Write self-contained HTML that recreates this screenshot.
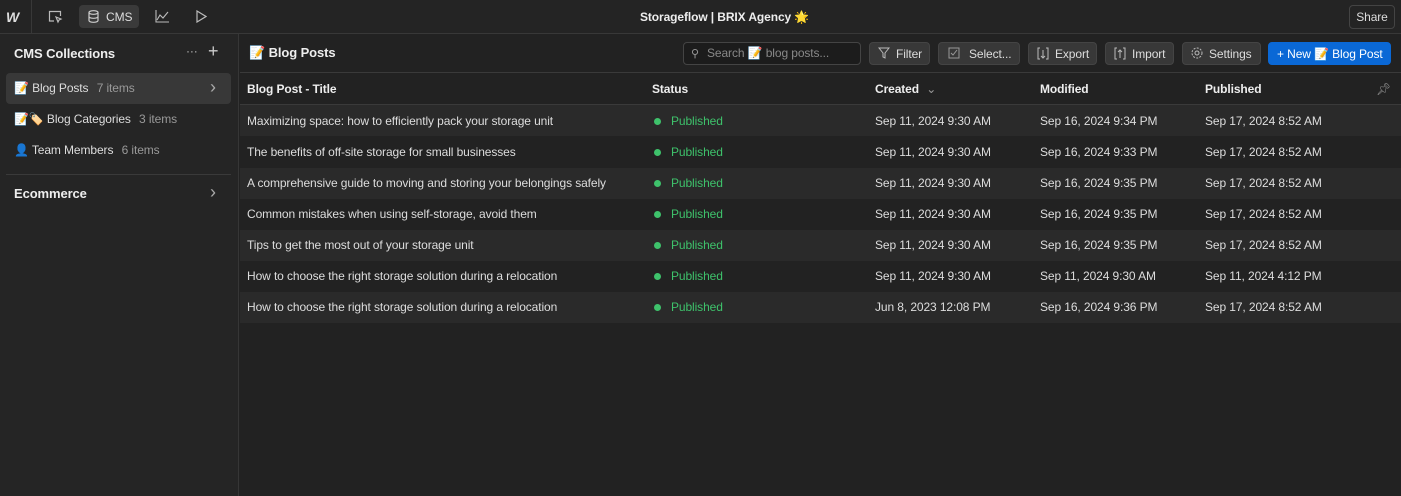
<!DOCTYPE html><html><head><meta charset="utf-8"><style>
*{box-sizing:border-box;margin:0;padding:0}
body{width:1401px;height:496px;background:#222;font-family:"Liberation Sans","Noto Sans CJK JP",sans-serif;color:#e6e6e6;font-size:12px;position:relative;overflow:hidden;letter-spacing:-0.1px}
.top{position:absolute;left:0;top:0;width:1401px;height:34px;background:#242424;border-bottom:1px solid #383838}
.side{position:absolute;left:0;top:34px;width:239px;height:462px;background:#252525;border-right:1px solid #363636}
.main{position:absolute;left:240px;top:34px;width:1161px;height:462px;background:#222}
.abs{position:absolute;white-space:nowrap}
.btn{position:absolute;top:8px;height:23px;background:#383838;border-radius:4px;color:#ddd;font-size:12px;line-height:23px;padding-left:26px;border:1px solid #444}
.row{position:absolute;left:0;width:1161px;height:31px;line-height:31px;font-size:12px;color:#ddd}
.row span{position:absolute}
.dot{display:inline-block;width:7px;height:7px;border-radius:50%;background:#3ec26b;margin-right:10px;vertical-align:0}
.pub{color:#3ec26b}
.h span{font-weight:bold;color:#eee}
.chev{font-size:18px;font-weight:300;color:#aaa}
</style></head><body>
<div class="top">
 <div class="abs" style="left:6px;top:9px;font-weight:bold;font-style:italic;font-size:14px;color:#ddd;letter-spacing:-2px">W</div>
 <div class="abs" style="left:31px;top:0;width:1px;height:34px;background:#383838"></div>
 <svg class="abs" style="left:48px;top:10px" width="15" height="14" viewBox="0 0 15 14" fill="none" stroke="#bbb" stroke-width="1.2"><path d="M6 11H1.5V1.5h11V6"/><path d="M8 7l5 2-2 1-1 2z"/></svg>
 <div class="abs" style="left:79px;top:5px;width:60px;height:23px;background:#3a3a3a;border-radius:4px"></div>
 <svg class="abs" style="left:88px;top:10px" width="11" height="13" viewBox="0 0 11 13" fill="none" stroke="#ccc" stroke-width="1.2"><ellipse cx="5.5" cy="2.5" rx="4.5" ry="1.8"/><path d="M1 2.5v8c0 1 2 1.8 4.5 1.8S10 11.5 10 10.5v-8M1 6.5c0 1 2 1.8 4.5 1.8S10 7.5 10 6.5"/></svg>
 <div class="abs" style="left:106px;top:10px;color:#ddd">CMS</div>
 <svg class="abs" style="left:155px;top:10px" width="14" height="13" viewBox="0 0 14 13" fill="none" stroke="#bbb" stroke-width="1.1"><path d="M1 0v12h13"/><path d="M2 10l3-5 3 3 5-6"/></svg>
 <svg class="abs" style="left:195px;top:10px" width="12" height="13" viewBox="0 0 12 13" fill="none" stroke="#bbb" stroke-width="1.2"><path d="M2 1l9 5.5L2 12z"/></svg>
 <div class="abs" style="left:640px;top:10px;font-size:12px;color:#eee;font-weight:bold">Storageflow | BRIX Agency 🌟</div>
 <div class="abs" style="left:1349px;top:5px;width:46px;height:24px;border:1px solid #444;border-radius:4px;text-align:center;line-height:22px;color:#ddd">Share</div>
</div>
<div class="side">
 <div class="abs" style="left:14px;top:12px;font-size:13px;font-weight:bold;color:#eee">CMS Collections</div>
 <div class="abs" style="left:186px;top:10px;color:#bbb;font-size:12px">···</div>
 <div class="abs" style="left:208px;top:7px;color:#ccc;font-size:18px;font-weight:300">+</div>
 <div class="abs" style="left:6px;top:39px;width:225px;height:31px;background:#383838;border-radius:4px"></div>
 <div class="abs" style="left:14px;top:47px;color:#ddd">📝 Blog Posts <span style="color:#999;margin-left:5px">7 items</span></div>
 <div class="abs chev" style="left:210px;top:43px">›</div>
 <div class="abs" style="left:14px;top:78px;color:#ddd">📝🏷️ Blog Categories <span style="color:#999;margin-left:5px">3 items</span></div>
 <div class="abs" style="left:14px;top:109px;color:#ddd">👤 Team Members <span style="color:#999;margin-left:5px">6 items</span></div>
 <div class="abs" style="left:6px;top:140px;width:225px;height:1px;background:#3a3a3a"></div>
 <div class="abs" style="left:14px;top:152px;font-size:13px;font-weight:bold;color:#eee">Ecommerce</div>
 <div class="abs chev" style="left:210px;top:148px">›</div>
</div>
<div class="main">
 <div class="abs" style="left:9px;top:11px;font-size:13px;font-weight:bold;color:#eee">📝 Blog Posts</div>
 <div class="abs" style="left:443px;top:8px;width:178px;height:23px;border:1px solid #444;border-radius:4px;background:#1c1c1c;color:#888;line-height:21px;padding-left:23px">Search 📝 blog posts...</div>
 <div class="abs" style="left:451px;top:13px;color:#999;font-size:11px">⚲</div>
 <div class="btn" style="left:629px;width:61px">Filter</div>
 <div class="btn" style="left:698px;width:82px;padding-left:30px">Select...</div>
 <div class="btn" style="left:788px;width:69px">Export</div>
 <div class="btn" style="left:865px;width:69px">Import</div>
 <div class="btn" style="left:942px;width:79px">Settings</div>
 <div class="btn" style="left:1028px;width:123px;background:#0a68d6;border-color:#0a68d6;color:#fff;padding-left:8px">+ New 📝 Blog Post</div>
 <svg class="abs" style="left:638px;top:13px" width="12" height="12" viewBox="0 0 12 12" fill="none" stroke="#bbb"><path d="M1 1h10L7 6v5l-2-1V6z"/></svg>
 <svg class="abs" style="left:708px;top:13px" width="12" height="12" viewBox="0 0 12 12" fill="none" stroke="#999"><path d="M1 1h10v10H1z"/><path d="M3 6l2 2 4-5"/></svg>
 <svg class="abs" style="left:797px;top:13px" width="12" height="13" viewBox="0 0 12 13" fill="none" stroke="#bbb"><path d="M3 1H1v11h2M9 1h2v11H9M6 3v8M4 9l2 2 2-2"/></svg>
 <svg class="abs" style="left:874px;top:13px" width="12" height="13" viewBox="0 0 12 13" fill="none" stroke="#bbb"><path d="M3 1H1v11h2M9 1h2v11H9M6 11V3M4 5l2-2 2 2"/></svg>
 <svg class="abs" style="left:951px;top:13px" width="12" height="12" viewBox="0 0 12 12" fill="none" stroke="#bbb"><circle cx="6" cy="6" r="2"/><circle cx="6" cy="6" r="5" stroke-dasharray="2 1.3"/></svg>
 <div class="abs" style="left:0;top:38px;width:1161px;height:1px;background:#3a3a3a"></div>
 <div class="row h" style="top:40px"><span style="left:7px">Blog Post - Title</span><span style="left:412px">Status</span><span style="left:635px">Created <span style="position:static;color:#999;font-weight:normal;margin-left:4px">⌄</span></span><span style="left:800px">Modified</span><span style="left:965px">Published</span><span style="left:1136px;color:#999;font-weight:normal">📌︎</span></div>
 <div class="abs" style="left:0;top:70px;width:1161px;height:1px;background:#3a3a3a"></div>
 <div class="row" style="top:71px;background:#2a2a2a;line-height:33px"><span style="left:7px">Maximizing space: how to efficiently pack your storage unit</span><span style="left:414px" class="pub"><i class="dot"></i>Published</span><span style="left:635px">Sep 11, 2024 9:30 AM</span><span style="left:800px">Sep 16, 2024 9:34 PM</span><span style="left:965px">Sep 17, 2024 8:52 AM</span></div>
 <div class="row" style="top:103px"><span style="left:7px">The benefits of off-site storage for small businesses</span><span style="left:414px" class="pub"><i class="dot"></i>Published</span><span style="left:635px">Sep 11, 2024 9:30 AM</span><span style="left:800px">Sep 16, 2024 9:33 PM</span><span style="left:965px">Sep 17, 2024 8:52 AM</span></div>
 <div class="row" style="top:134px;background:#2a2a2a"><span style="left:7px">A comprehensive guide to moving and storing your belongings safely</span><span style="left:414px" class="pub"><i class="dot"></i>Published</span><span style="left:635px">Sep 11, 2024 9:30 AM</span><span style="left:800px">Sep 16, 2024 9:35 PM</span><span style="left:965px">Sep 17, 2024 8:52 AM</span></div>
 <div class="row" style="top:165px"><span style="left:7px">Common mistakes when using self-storage, avoid them</span><span style="left:414px" class="pub"><i class="dot"></i>Published</span><span style="left:635px">Sep 11, 2024 9:30 AM</span><span style="left:800px">Sep 16, 2024 9:35 PM</span><span style="left:965px">Sep 17, 2024 8:52 AM</span></div>
 <div class="row" style="top:196px;background:#2a2a2a"><span style="left:7px">Tips to get the most out of your storage unit</span><span style="left:414px" class="pub"><i class="dot"></i>Published</span><span style="left:635px">Sep 11, 2024 9:30 AM</span><span style="left:800px">Sep 16, 2024 9:35 PM</span><span style="left:965px">Sep 17, 2024 8:52 AM</span></div>
 <div class="row" style="top:227px"><span style="left:7px">How to choose the right storage solution during a relocation</span><span style="left:414px" class="pub"><i class="dot"></i>Published</span><span style="left:635px">Sep 11, 2024 9:30 AM</span><span style="left:800px">Sep 11, 2024 9:30 AM</span><span style="left:965px">Sep 11, 2024 4:12 PM</span></div>
 <div class="row" style="top:258px;background:#2a2a2a"><span style="left:7px">How to choose the right storage solution during a relocation</span><span style="left:414px" class="pub"><i class="dot"></i>Published</span><span style="left:635px">Jun 8, 2023 12:08 PM</span><span style="left:800px">Sep 16, 2024 9:36 PM</span><span style="left:965px">Sep 17, 2024 8:52 AM</span></div>
</div>
</body></html>
